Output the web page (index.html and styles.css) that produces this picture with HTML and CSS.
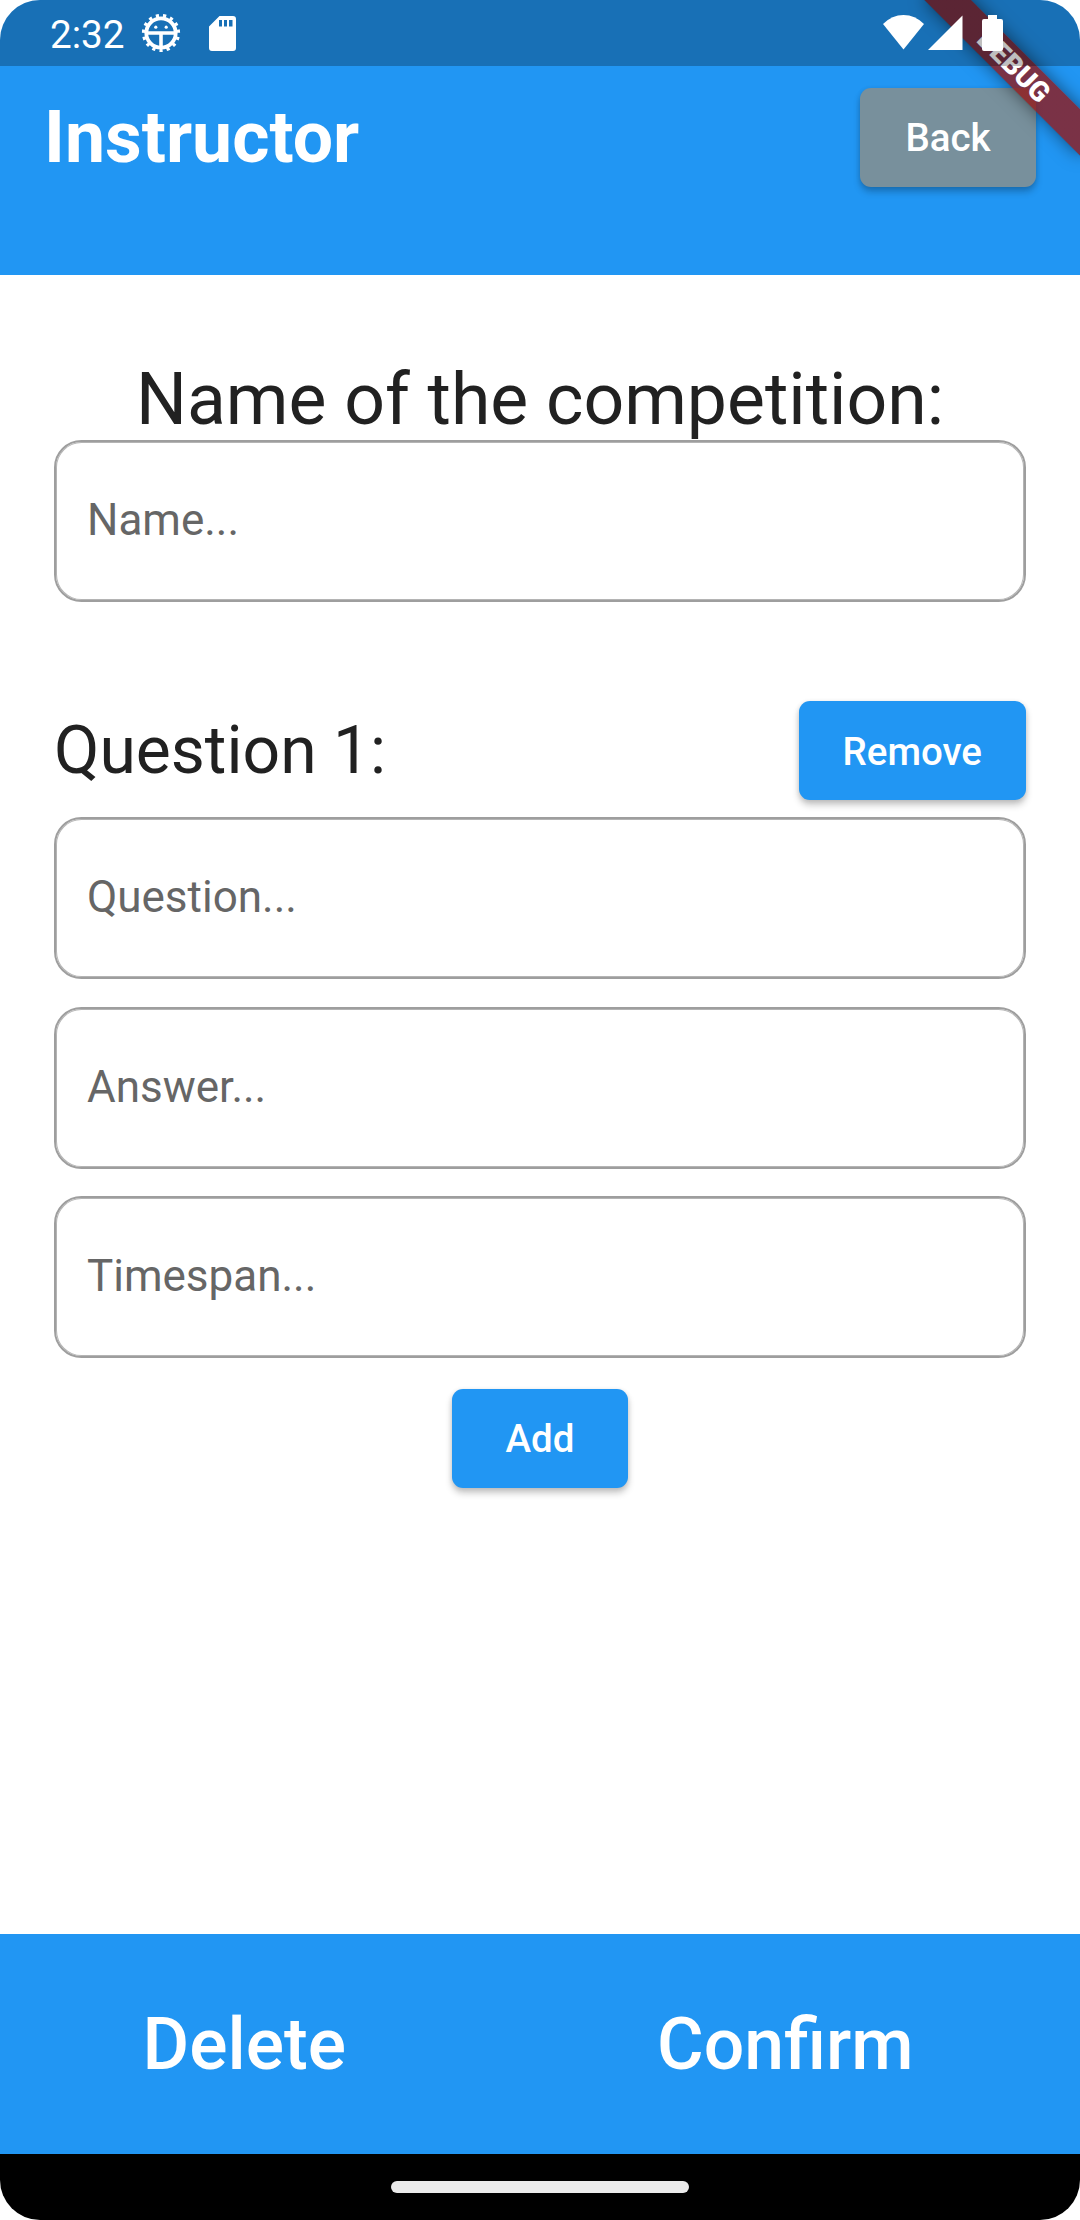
FILE: index.html
```html
<!DOCTYPE html>
<html lang="en">
<head>
<meta charset="utf-8">
<title>Instructor</title>
<link rel="stylesheet" href="styles.css">
</head>
<body>
<div class="screen">
  <header class="header">
    <h1 class="header-title">Instructor</h1>
    <button class="btn btn-back">Back</button>
  </header>

  <main class="content">
    <h2 class="competition-title">Name of the competition:</h2>
    <input class="field" type="text" placeholder="Name...">

    <div class="question-head">
      <h3 class="question-title">Question 1:</h3>
      <button class="btn btn-remove">Remove</button>
    </div>
    <div class="question-fields">
      <input class="field" type="text" placeholder="Question...">
      <input class="field" type="text" placeholder="Answer...">
      <input class="field" type="text" placeholder="Timespan...">
    </div>
    <button class="btn btn-add">Add</button>
  </main>

  <footer class="actions">
    <button class="action">Delete</button>
    <button class="action">Confirm</button>
  </footer>
  <div class="nav-bar"><div class="nav-handle"></div></div>

  <div class="debug-banner">DEBUG</div>

  <div class="status-bar">
    <span class="clock">2:32</span>
    <svg class="icon-gear" width="40" height="40" viewBox="-20 -20 40 40">
      <circle r="14.7" fill="none" stroke="#fff" stroke-width="3.8"/>
      <circle r="17" fill="none" stroke="#fff" stroke-width="4.2" pathLength="150" stroke-dasharray="4.4 5.6" transform="rotate(84.7)"/>
      <path d="M-14 0H14M0 0V14" stroke="#fff" stroke-width="3.6"/>
      <circle cx="-5.2" cy="-5.8" r="1.6" fill="#fff"/>
      <circle cx="5.2" cy="-5.8" r="1.6" fill="#fff"/>
    </svg>
    <svg class="icon-sd" width="27" height="35" viewBox="0 0 27 35">
      <path fill="#fff" fill-rule="evenodd" d="M10.5 0H24Q27 0 27 3V32Q27 35 24 35H3Q0 35 0 32V10.5ZM10 4V10.5H13V4ZM15 4V10.5H18V4ZM20 4V10.5H23.5V4Z"/>
    </svg>
    <div class="status-right">
      <svg width="41" height="35" viewBox="0 0 41 35"><path fill="#fff" d="M0 9Q9 0 20.5 0T41 9L20.5 34.5Z"/></svg>
      <svg width="35" height="35" viewBox="0 0 35 35"><path fill="#fff" d="M0 35L34.5 .5V35Z"/></svg>
      <svg class="icon-battery" width="21" height="36" viewBox="0 0 21 36"><path fill="#fff" d="M6 0H15V4H19Q21 4 21 6V34Q21 36 19 36H2Q0 36 0 34V6Q0 4 2 4H6Z"/></svg>
    </div>
  </div>
</div>
</body>
</html>
```

FILE: styles.css
```css
* {
  box-sizing: border-box;
}

body {
  margin: 0;
  background: #fff;
  font-family: Roboto, "Noto Sans", sans-serif;
}

h1, h2, h3 {
  margin: 0;
  font-weight: 400;
}

button {
  border: 0;
  font-family: inherit;
  font-weight: 500;
  color: #fff;
}

.screen {
  position: relative;
  display: flex;
  flex-direction: column;
  width: 1080px;
  height: 2220px;
  overflow: hidden;
  border-radius: 40px;
  background: #fff;
}

.header {
  display: flex;
  justify-content: space-between;
  align-items: flex-start;
  height: 275px;
  padding: 88px 44px 0;
  background: #2196f3;
}

.header-title {
  font-size: 71.5px;
  font-weight: 700;
  line-height: 99px;
  color: #fff;
}

.btn {
  min-width: 176px;
  height: 99px;
  padding: 0 44px;
  border-radius: 11px;
  background: #2196f3;
  font-size: 38.5px;
  box-shadow: 0 5px 7px rgba(0, 0, 0, .22), 0 1px 5px rgba(0, 0, 0, .1);
}

.btn-back {
  background: #78909c;
}

.btn-remove {
  padding-top: 2px;
}

.content {
  flex: 1;
  display: flex;
  flex-direction: column;
  padding: 84px 54px 0;
  color: #212121;
}

.competition-title {
  font-size: 71.5px;
  line-height: 81px;
  text-align: center;
}

.field {
  display: block;
  width: 100%;
  height: 162px;
  padding: 0 31px 2px;
  border: 2px solid #9e9e9e;
  border-radius: 27.5px;
  box-shadow: inset 0 0 0 1px #b4b4b4;
  background: transparent;
  font-family: inherit;
  font-size: 44px;
  color: #212121;
}

.field::placeholder {
  color: #666;
  opacity: 1;
}

.question-head {
  display: flex;
  justify-content: space-between;
  align-items: center;
  margin-top: 99px;
}

.question-title {
  font-size: 66px;
  line-height: 99px;
}

.question-fields {
  display: flex;
  flex-direction: column;
  gap: 27.5px;
  margin-top: 17px;
}

.btn-add {
  align-self: center;
  margin-top: 31px;
}

.actions {
  display: flex;
  align-items: center;
  gap: 311px;
  height: 220px;
  padding-left: 142.5px;
  background: #2196f3;
}

.action {
  padding: 0;
  background: none;
  font-size: 71.5px;
}

.nav-bar {
  display: flex;
  justify-content: center;
  align-items: center;
  height: 66px;
  background: #000;
}

.nav-handle {
  width: 298px;
  height: 12px;
  border-radius: 6px;
  background: #ebebeb;
}

/* corner ribbon: 110px from the top right corner, turned by 45 degrees */
.debug-banner {
  position: absolute;
  top: 77px;
  left: 970px;
  width: 220px;
  height: 33px;
  transform: rotate(45deg);
  transform-origin: 110px -77px;
  background: linear-gradient(rgba(183, 28, 28, .627), rgba(183, 28, 28, .627)), rgba(0, 0, 0, .42);
  box-shadow: 0 0 17px rgba(0, 0, 0, .5);
  font-size: 28px;
  font-weight: 900;
  line-height: 33px;
  text-align: center;
  color: #fff;
}

.status-bar {
  position: absolute;
  top: 0;
  left: 0;
  display: flex;
  align-items: flex-start;
  width: 100%;
  height: 66px;
  padding: 0 77px 0 50px;
  background: rgba(0, 0, 0, .25);
  color: #fff;
}

.clock {
  font-size: 38.7px;
  line-height: 70px;
}

.icon-gear {
  margin: 13px 0 0 16.5px;
}

.icon-sd {
  margin: 16px 0 0 28px;
}

.status-right {
  display: flex;
  gap: 4px;
  margin: 15px 0 0 auto;
}

.icon-battery {
  margin-left: 15px;
}
```
